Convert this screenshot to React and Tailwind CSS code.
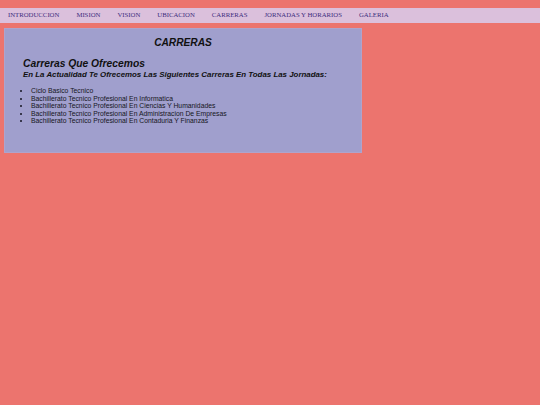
export default function App() {
  const links = ["INTRODUCCION", "MISION", "VISION", "UBICACION", "CARRERAS", "JORNADAS Y HORARIOS", "GALERIA"];
  const carreras = [
    "Ciclo Basico Tecnico",
    "Bachillerato Tecnico Profesional En Informatica",
    "Bachillerato Tecnico Profesional En Ciencias Y Humanidades",
    "Bachillerato Tecnico Profesional En Administracion De Empresas",
    "Bachillerato Tecnico Profesional En Contaduria Y Finanzas",
  ];

  return (
    <div className="min-h-[405px] w-[540px] bg-[#ec746e] pt-[8px]">
      <nav className="flex h-[15px] items-center gap-[17px] bg-[#dbc0dc] pl-[8px] font-['Liberation_Serif',serif] text-[6.75px] text-[#3b2d7c]">
        {links.map((l) => (
          <span key={l}>{l}</span>
        ))}
      </nav>

      <div className="ml-[4px] mt-[5px] h-[125px] w-[358px] border border-[#aea4cc] bg-[#a09fcd] font-['Liberation_Sans',sans-serif] text-[#111]">
        <h1 className="pt-[7px] text-center text-[10.2px] font-bold italic leading-[13px]">CARRERAS</h1>
        <div className="pl-[18px] pt-[9px]">
          <h2 className="text-[10.3px] font-bold italic leading-[12px]">Carreras Que Ofrecemos</h2>
          <p className="text-[7.9px] font-bold italic leading-[10px]">
            En La Actualidad Te Ofrecemos Las Siguientes Carreras En Todas Las Jornadas:
          </p>
          <ul className="mt-[7px] list-disc pl-[8px] text-[6.8px] leading-[7.5px] text-[#161622]">
            {carreras.map((c) => (
              <li key={c}>{c}</li>
            ))}
          </ul>
        </div>
      </div>
    </div>
  );
}
